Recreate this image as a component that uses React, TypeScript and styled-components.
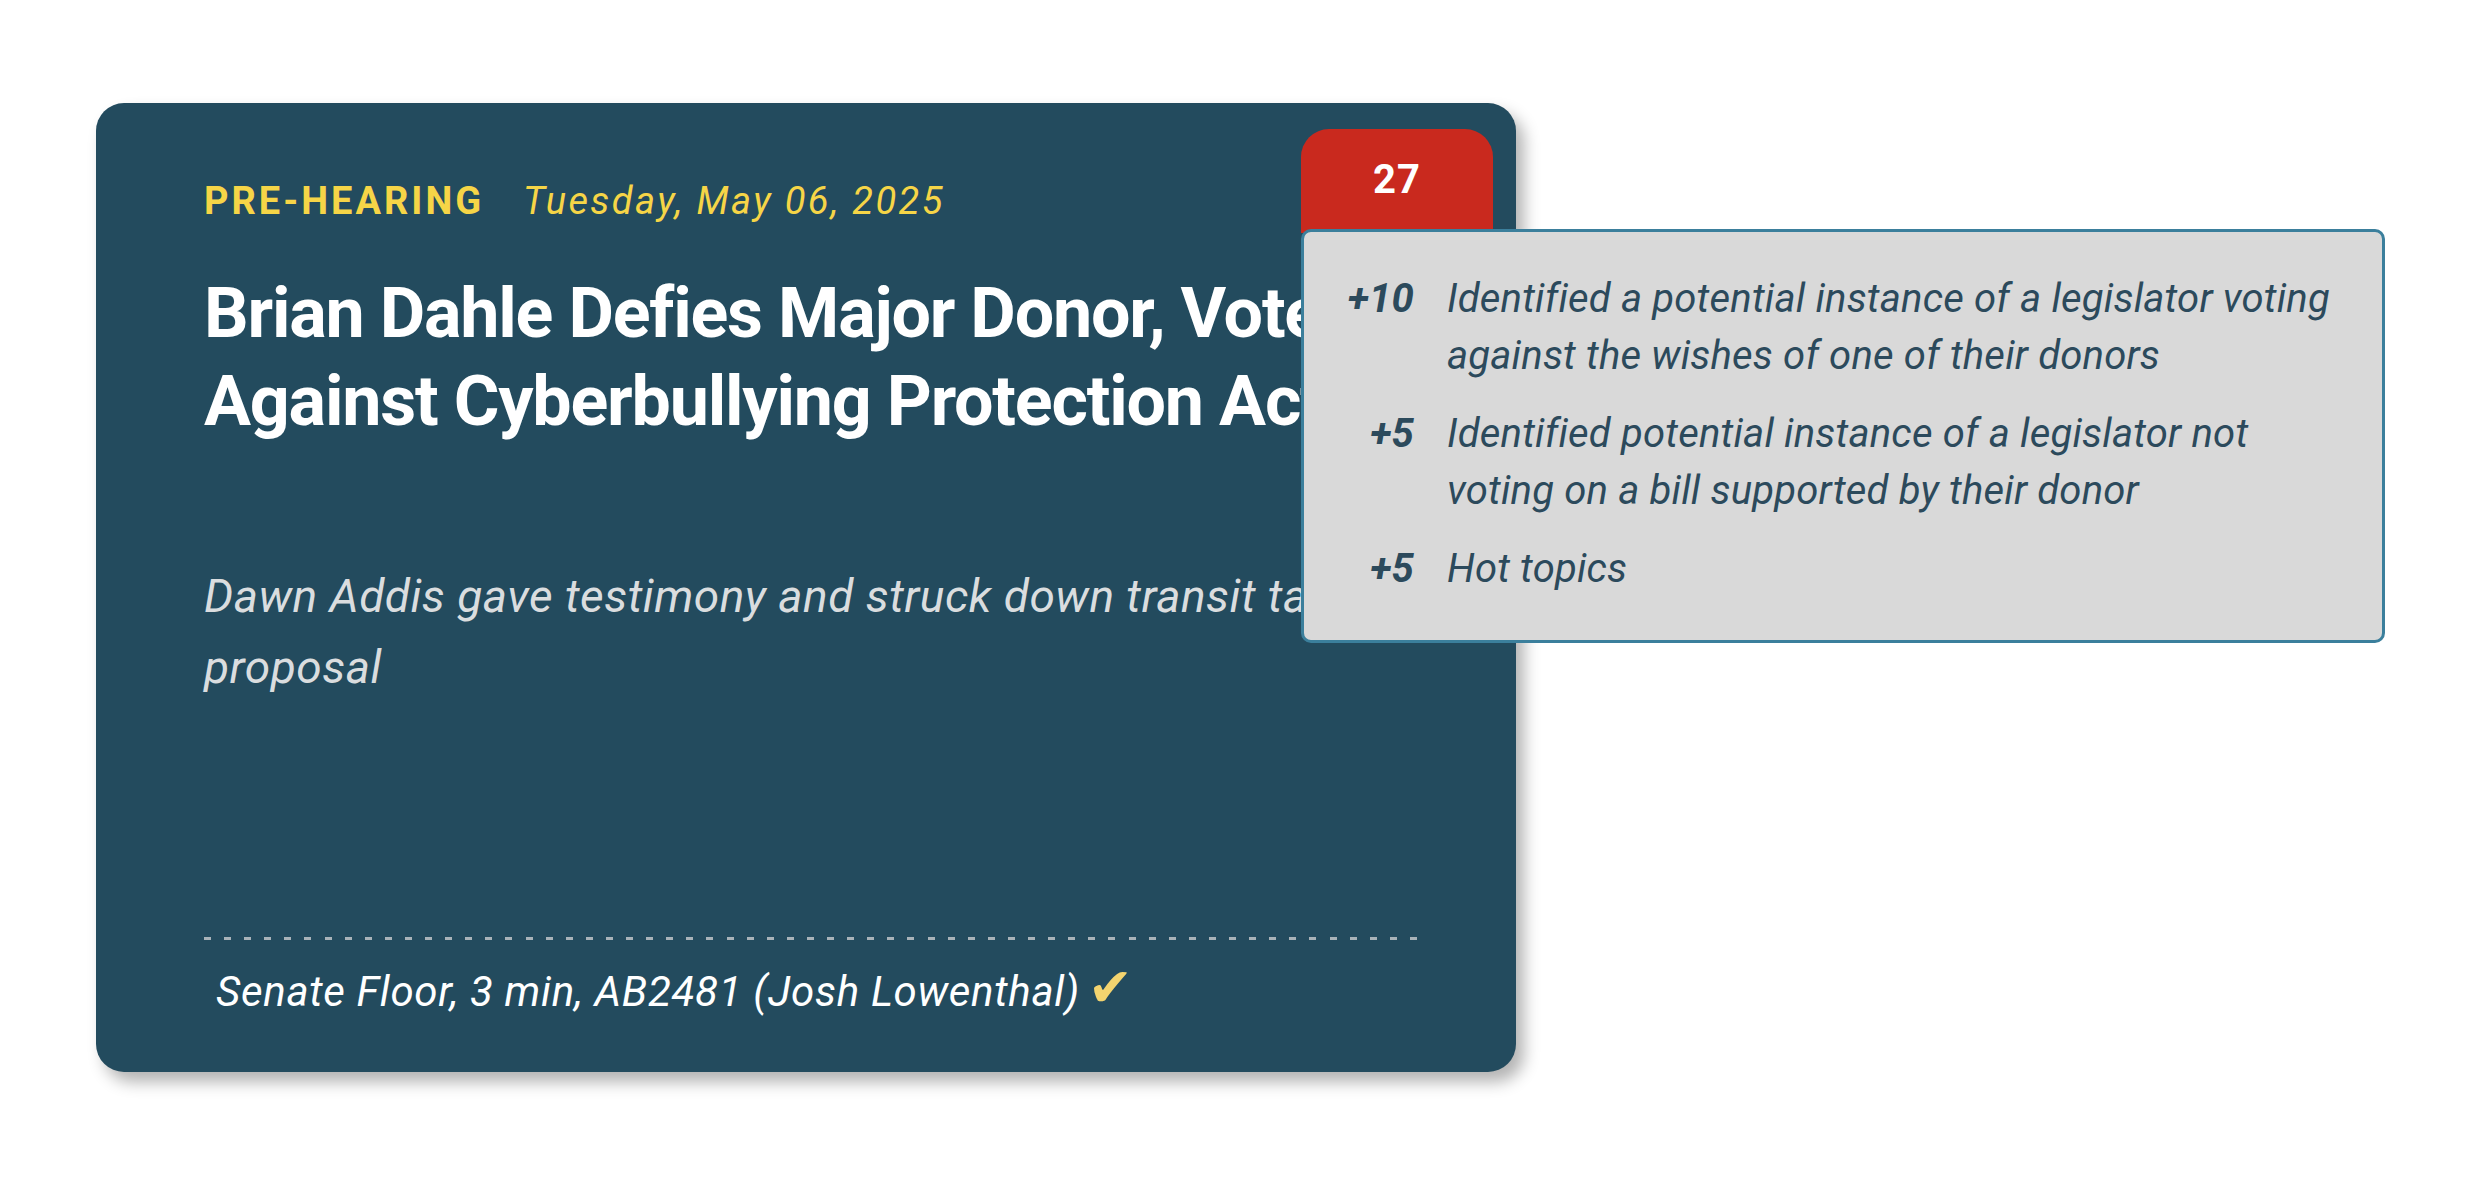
import React from "react";
import styled, { createGlobalStyle } from "styled-components";

const GlobalStyle = createGlobalStyle`
	html, body {
		margin: 0;
		padding: 0;
		background: #ffffff;
		font-family: Roboto, "Noto Sans", "Liberation Sans", sans-serif;
	}
	* {
		box-sizing: border-box;
	}
`;

const Page = styled.div`
	padding: 103px 0 0 96px;
	min-height: 1204px;
`;

const Card = styled.div`
	position: relative;
	display: flex;
	flex-direction: column;
	width: 1420px;
	height: 969px;
	padding: 75px 98px 55px 108px;
	background-color: #234b5e;
	border-radius: 28px;
	box-shadow: 8px 10px 16px rgba(0, 0, 0, 0.3);
`;

const MetaRow = styled.div`
	display: flex;
	align-items: baseline;
	gap: 39px;
	font-size: 38px;
	line-height: 46px;
	color: #f6d547;
`;

const Stage = styled.span`
	font-weight: 700;
	letter-spacing: 3px;
`;

const DateText = styled.span`
	font-style: italic;
	letter-spacing: 2.4px;
`;

const Title = styled.h1`
	margin: 45px 0 0;
	font-size: 70px;
	line-height: 88px;
	font-weight: 700;
	letter-spacing: -1.2px;
	color: #ffffff;
`;

const Summary = styled.p`
	margin: 116px 0 0;
	font-size: 46px;
	line-height: 71px;
	font-style: italic;
	letter-spacing: 0.5px;
	color: #dadddf;
`;

const Footer = styled.div`
	margin-top: auto;
`;

const DashedRule = styled.div`
	height: 3px;
	background-image: repeating-linear-gradient(
		90deg,
		#a9b3b9 0 7px,
		transparent 7px 20.1px
	);
`;

const Source = styled.div`
	display: flex;
	align-items: baseline;
	gap: 8px;
	margin-top: 23px;
	padding-left: 12px;
	font-size: 42px;
	line-height: 50px;
	font-style: italic;
	letter-spacing: 0.7px;
	color: #ffffff;
`;

const Check = styled.span`
	font-family: "DejaVu Sans", sans-serif;
	font-size: 54px;
	line-height: 50px;
	color: #f3d46f;
`;

const ScoreBadge = styled.div`
	position: absolute;
	top: 26px;
	right: 23px;
	width: 192px;
	height: 104px;
	padding-top: 31px;
	background-color: #c9291e;
	border-radius: 28px 28px 0 0;
	text-align: center;
	font-size: 40px;
	line-height: 40px;
	font-weight: 700;
	letter-spacing: 1px;
	color: #ffffff;
`;

const Tooltip = styled.div`
	position: absolute;
	top: 100px;
	left: 0;
	z-index: 2;
	width: 1084px;
	height: 414px;
	padding: 38px 34px 0 0;
	background-color: #d9d9d9;
	border: 3px solid #3b7f9c;
	border-radius: 10px;
	text-align: left;
	letter-spacing: 0;
	font-weight: 400;
`;

const ScoreList = styled.div`
	display: grid;
	grid-template-columns: 110px 1fr;
	column-gap: 33px;
	row-gap: 21px;
	font-size: 40px;
	line-height: 57px;
	font-style: italic;
	letter-spacing: 0.2px;
	color: #2c4a5c;
`;

const Points = styled.div`
	text-align: right;
	font-weight: 700;
`;

const Reason = styled.div``;

const reasons = [
	{
		points: "+10",
		text: "Identified a potential instance of a legislator voting against the wishes of one of their donors",
	},
	{
		points: "+5",
		text: "Identified potential instance of a legislator not voting on a bill supported by their donor",
	},
	{ points: "+5", text: "Hot topics" },
];

const App = () => {
	return (
		<Page>
			<GlobalStyle />
			<Card>
				<MetaRow>
					<Stage>PRE-HEARING</Stage>
					<DateText>Tuesday, May 06, 2025</DateText>
				</MetaRow>
				<Title>
					Brian Dahle Defies Major Donor, Votes Against Cyberbullying
					Protection Act
				</Title>
				<Summary>
					Dawn Addis gave testimony and struck down transit tax proposal
				</Summary>
				<Footer>
					<DashedRule />
					<Source>
						Senate Floor, 3 min, AB2481 (Josh Lowenthal)
						<Check>✔</Check>
					</Source>
				</Footer>
				<ScoreBadge>
					27
					<Tooltip>
						<ScoreList>
							{reasons.map((r, i) => (
								<React.Fragment key={i}>
									<Points>{r.points}</Points>
									<Reason>{r.text}</Reason>
								</React.Fragment>
							))}
						</ScoreList>
					</Tooltip>
				</ScoreBadge>
			</Card>
		</Page>
	);
};

export default App;
